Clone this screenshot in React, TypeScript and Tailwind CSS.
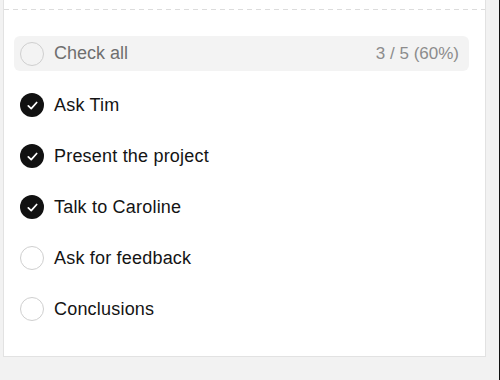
import React, { useState } from 'react';

const ITEMS = [
  { label: 'Ask Tim', done: true },
  { label: 'Present the project', done: true },
  { label: 'Talk to Caroline', done: true },
  { label: 'Ask for feedback', done: false },
  { label: 'Conclusions', done: false },
];

const Circle: React.FC<{ checked: boolean }> = ({ checked }) =>
  checked ? (
    <span className="flex h-[24px] w-[24px] shrink-0 items-center justify-center rounded-full bg-[#111]">
      <svg width="13" height="13" viewBox="0 0 14 14" fill="none">
        <path d="M2.5 7.5 L5.6 10.3 L11.5 3.8" stroke="white" strokeWidth="1.9" strokeLinecap="round" strokeLinejoin="round" />
      </svg>
    </span>
  ) : (
    <span className="h-[24px] w-[24px] shrink-0 rounded-full border-[1.5px] border-[#cfcfcf] bg-white" />
  );

export default function App() {
  const [items, setItems] = useState(ITEMS);
  const doneCount = items.filter((i) => i.done).length;
  const pct = Math.round((doneCount / items.length) * 100);

  return (
    <div className="flex h-[380px] w-[500px] bg-[#f2f2f2] font-['Liberation_Sans',Arial,sans-serif]">
      <div className="flex flex-1 pl-[3px] pr-[13px]">
        <div className="flex h-[357px] flex-1 flex-col border-b border-l border-r border-[#e2e2e2] bg-white">
          {/* dashed separator */}
          <div className="mt-[9px] h-[1px] bg-[linear-gradient(to_right,#dcdcdc_5px,transparent_5px)] bg-[length:9px_1px]" />
          <div className="ml-[10px] mr-[16px] mt-[26px] flex h-[35px] items-center rounded-[6px] bg-[#f3f3f3] pl-[6px] pr-[10px]">
            <span className="h-[24px] w-[24px] shrink-0 rounded-full border-[1.5px] border-[#cfcfcf]" />
            <span className="ml-[10px] text-[18px] text-[#6f6f6f]">Check all</span>
            <span className="ml-auto text-[17px] text-[#8c8c8c]">
              {doneCount} / {items.length} ({pct}%)
            </span>
          </div>
          <div className="mt-[22px] flex flex-col gap-[27px] pl-[16px]">
            {items.map((item, idx) => (
              <button
                key={item.label}
                type="button"
                onClick={() =>
                  setItems(items.map((it, i) => (i === idx ? { ...it, done: !it.done } : it)))
                }
                className="flex h-[24px] items-center text-left"
              >
                <Circle checked={item.done} />
                <span className="ml-[10px] text-[18px] tracking-[0.2px] text-[#141414]">{item.label}</span>
              </button>
            ))}
          </div>
        </div>
      </div>
      <div className="w-[1px] shrink-0 bg-[#111]" />
    </div>
  );
}
